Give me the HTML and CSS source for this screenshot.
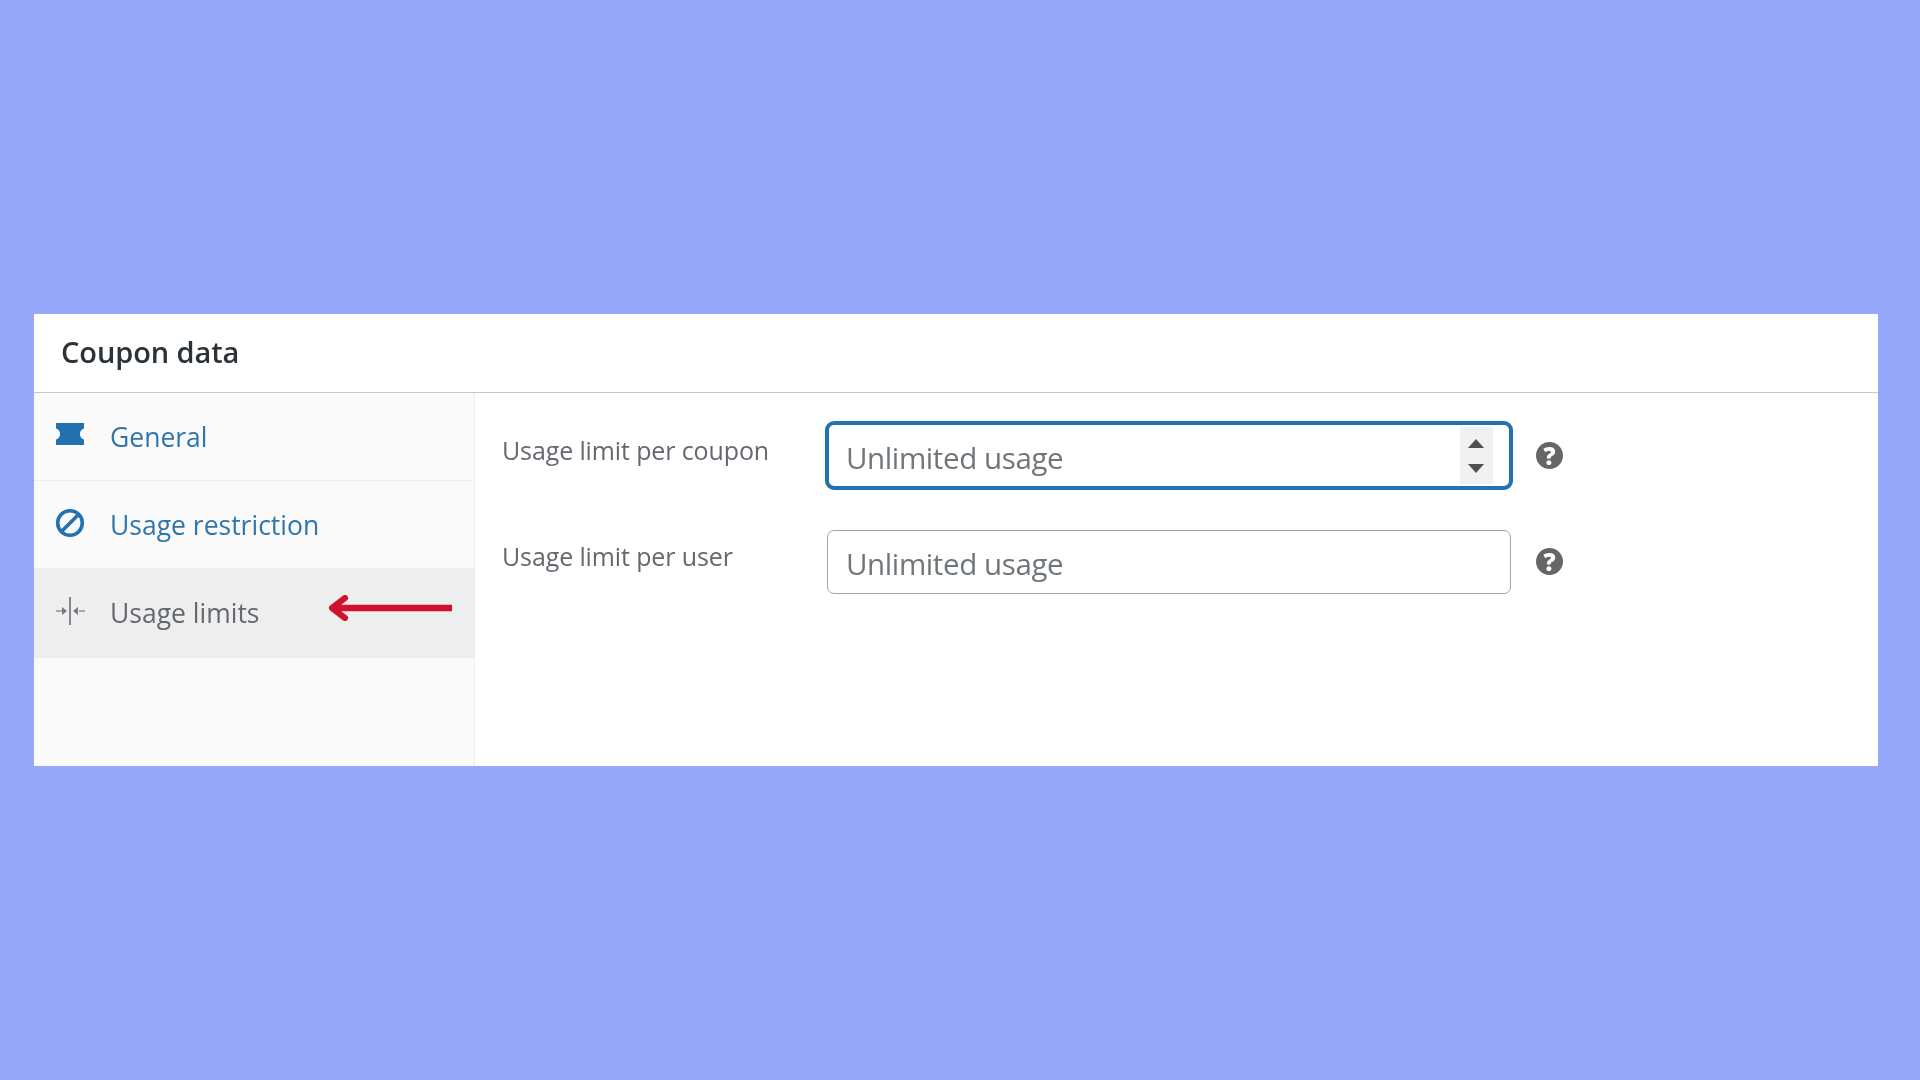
FILE: index.html
```html
<!DOCTYPE html>
<html lang="en">
<head>
<meta charset="utf-8">
<title>Coupon data</title>
<link rel="stylesheet" href="styles.css">
</head>
<body>
<main class="card">
  <h2 class="card-title">Coupon data</h2>
  <div class="card-body">
    <nav class="tabs">
      <a class="tab" href="#">
        <svg class="tab-icon tab-icon-ticket" viewBox="0 0 30 24"><path fill="#2271b1" d="M1 1h28v5.500c-2.600.8-4 2.800-4 5.500s1.400 4.700 4 5.500V23H1v-5.500c2.600-.8 4-2.800 4-5.500S3.600 7.300 1 6.500z"/></svg>
        <span>General</span>
      </a>
      <a class="tab" href="#">
        <svg class="tab-icon" viewBox="0 0 30 30"><circle cx="15" cy="15" r="12.300" fill="none" stroke="#2271b1" stroke-width="3.600"/><path d="M7 23 23 7" stroke="#2271b1" stroke-width="3.600"/></svg>
        <span>Usage restriction</span>
      </a>
      <a class="tab tab-active" href="#">
        <svg class="tab-icon" viewBox="0 0 30 30"><path d="M15 1v28" stroke="#6f6a80" stroke-width="1.600"/><path d="M1 15h8M24 15h6" stroke="#a8a8a8" stroke-width="2"/><path d="M7 11l5 4-5 4zM23 11l-5 4 5 4z" fill="#747a80"/></svg>
        <span>Usage limits</span>
        <svg class="tab-arrow" viewBox="0 0 126 26"><path d="M124 13H6" stroke="#d0112b" stroke-width="6.500"/><path d="M17 3 4 13l13 10" fill="none" stroke="#d0112b" stroke-width="6" stroke-linecap="round" stroke-linejoin="round"/></svg>
      </a>
    </nav>
    <section class="fields">
      <div class="field">
        <label class="field-label" for="per-coupon">Usage limit per coupon</label>
        <div class="input-wrap">
          <input class="input input-focus" id="per-coupon" type="text" placeholder="Unlimited usage">
          <span class="spinner"><i class="spin-up"></i><i class="spin-down"></i></span>
        </div>
        <span class="help">?</span>
      </div>
      <div class="field field-second">
        <label class="field-label" for="per-user">Usage limit per user</label>
        <div class="input-wrap">
          <input class="input" id="per-user" type="text" placeholder="Unlimited usage">
        </div>
        <span class="help">?</span>
      </div>
    </section>
  </div>
</main>
</body>
</html>
```
FILE: styles.css
```css
* { box-sizing: border-box; }
html, body { height: 100%; }
body {
  margin: 0;
  padding: 314px 42px 0 34px;
  background: #96a8f9;
  font-family: "Open Sans", "Noto Sans", sans-serif;
  color: #555;
}
.card {
  height: 452px;
  background: #fff;
  display: flex;
  flex-direction: column;
  filter: blur(0.4px);
}
.card-title {
  margin: 0;
  height: 79px;
  padding: 0 0 0 27px;
  border-bottom: 1.500px solid #c8c8c8;
  font-size: 29px;
  font-weight: 600;
  line-height: 75px;
  letter-spacing: -0.1px;
  color: #2c3338;
}
.card-body { flex: 1; display: flex; }
.tabs {
  width: 441px;
  background: #fafafa;
  border-right: 1px solid #eee;
  display: flex;
  flex-direction: column;
}
.tab {
  height: 88px;
  flex: none;
  display: flex;
  align-items: center;
  padding: 0 0 0 21px;
  border-bottom: 1px solid #eee;
  color: #2f76ad;
  font-size: 26.500px;
  text-decoration: none;
  position: relative;
}
.tab-active {
  height: 89px;
  padding-bottom: 1px;
  background: #eee;
  color: #646970;
  border-bottom: 0;
}
.tab-icon { width: 30px; height: 30px; margin-right: 25px; flex: none; position: relative; top: -2px; }
.tab-icon-ticket { top: -3px; }
.tab-arrow { position: absolute; left: 294px; top: 26px; width: 126px; height: 26px; }
.fields { flex: 1; padding: 28px 0 0 27px; }
.field { display: flex; align-items: center; }
.field-second { margin-top: 40px; }
.field-label {
  width: 323px;
  font-size: 25px;
  letter-spacing: -0.12px;
  color: #646970;
  position: relative;
  top: -6px;
}
.input-wrap { position: relative; width: 688px; }
.input {
  display: block;
  width: 684px;
  height: 64px;
  margin: 0 2px;
  padding: 2px 18px 0;
  border: 1.500px solid #a4a4a4;
  border-radius: 7px;
  background: #fff;
  font: 400 29.500px "Open Sans", "Noto Sans", sans-serif;
  letter-spacing: -0.4px;
  outline: 0;
}
.input::placeholder { color: #70757a; opacity: 1; }
.input-focus {
  width: 688px;
  height: 69px;
  margin: 0;
  padding: 4px 17px 0;
  border: 4px solid #2271b1;
  border-radius: 9px;
}
.spinner {
  position: absolute;
  left: 635px;
  top: 6px;
  width: 33px;
  height: 57px;
  background: #f0f0f0;
  display: flex;
  flex-direction: column;
  align-items: center;
  justify-content: center;
  gap: 16px;
  padding-right: 1px;
}
.spin-up, .spin-down { width: 0; height: 0; border-left: 8px solid transparent; border-right: 8px solid transparent; }
.spin-up { border-bottom: 9px solid #505050; }
.spin-down { border-top: 9px solid #505050; }
.help {
  margin-left: 23px;
  width: 27px;
  height: 27px;
  flex: none;
  border-radius: 50%;
  background: #666;
  color: #fff;
  font: 800 24px/27px "Open Sans", sans-serif;
  text-align: center;
}
.field-second .help { position: relative; top: -1px; }
```
